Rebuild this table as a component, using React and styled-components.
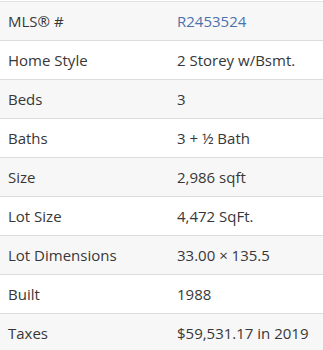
import React from 'react';
import styled, { createGlobalStyle } from 'styled-components';

const GlobalStyle = createGlobalStyle`
  body {
    margin: 0;
    padding-top: 1px;
    background: #fff;
    font-family: "Open Sans", "Noto Sans", sans-serif;
  }
`;

const Table = styled.table`
  width: 100%;
  border-collapse: collapse;
  border-top: 1px solid #e2e2e2;
  font-size: 15px;
  color: #373737;
`;

const Row = styled.tr`
  background: ${p => (p.$striped ? '#f7f7f7' : '#fff')};
  border-bottom: 1px solid #dcdcdc;
`;

const Label = styled.td`
  width: 168px;
  height: 38px;
  padding: 0 0 0 8px;
  vertical-align: middle;
`;

const Value = styled.td`
  padding: 0 0 0 1px;
  vertical-align: middle;
`;

const Link = styled.a`
  color: #4a72ad;
  text-decoration: none;
`;

const rows = [
  ['MLS® #', <Link href="#">R2453524</Link>],
  ['Home Style', '2 Storey w/Bsmt.'],
  ['Beds', '3'],
  ['Baths', '3 + ½ Bath'],
  ['Size', '2,986 sqft'],
  ['Lot Size', '4,472 SqFt.'],
  ['Lot Dimensions', '33.00 × 135.5'],
  ['Built', '1988'],
  ['Taxes', '$59,531.17 in 2019'],
];

export default function App() {
  return (
    <>
      <GlobalStyle />
      <Table>
        <tbody>
          {rows.map(([label, value], i) => (
            <Row key={label} $striped={i % 2 === 0}>
              <Label>{label}</Label>
              <Value>{value}</Value>
            </Row>
          ))}
        </tbody>
      </Table>
    </>
  );
}
